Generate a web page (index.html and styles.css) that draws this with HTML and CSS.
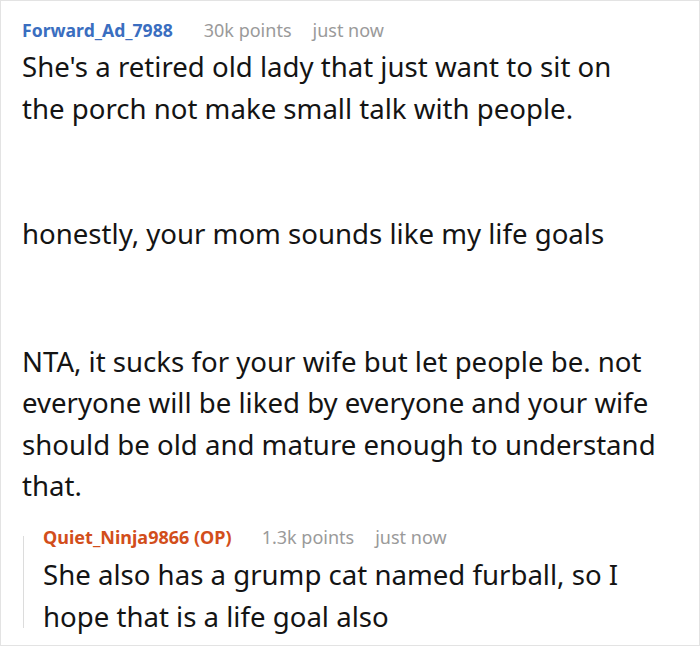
FILE: index.html
```html
<!DOCTYPE html>
<html lang="en">
<head>
<meta charset="utf-8">
<title>Comment</title>
<link rel="stylesheet" href="styles.css">
</head>
<body>
<div class="card">
  <div class="meta">
    <span class="author">Forward_Ad_7988</span>
    <span class="points">30k points</span>
    <span class="time">just now</span>
  </div>
  <div class="body">
    <p>She's a retired old lady that just want to sit on the porch not make small talk with people.</p>
    <p class="gap1">honestly, your mom sounds like my life goals</p>
    <p class="gap2">NTA, it sucks for your wife but let people be. not everyone will be liked by everyone and your wife should be old and mature enough to understand that.</p>
  </div>
  <div class="reply">
    <div class="meta">
      <span class="author op">Quiet_Ninja9866 (OP)</span>
      <span class="points">1.3k points</span>
      <span class="time">just now</span>
    </div>
    <div class="body">
      <p>She also has a grump cat named furball, so I hope that is a life goal also</p>
    </div>
  </div>
</div>
</body>
</html>
```

FILE: styles.css
```css
html, body {
  margin: 0;
  padding: 0;
  background: #ffffff;
}

.card {
  box-sizing: border-box;
  width: 700px;
  height: 646px;
  border: 1px solid #e3e3e3;
  padding: 17px 42px 0 21px;
  font-family: "Noto Sans", sans-serif;
  color: #141414;
  overflow: hidden;
}

.meta {
  display: flex;
  align-items: baseline;
  font-size: 18px;
  line-height: 24px;
  height: 24px;
  white-space: nowrap;
}

.author {
  font-weight: 700;
  font-size: 17.6px;
  color: #3a6ec0;
  margin-right: 31px;
}

.author.op {
  font-size: 18px;
  color: #d24e1b;
  margin-right: 30px;
}

.points {
  color: #9a9a9a;
  margin-right: 21px;
}

.time {
  color: #9a9a9a;
}

.body {
  margin-top: 4px;
}

.body p {
  margin: 0;
  font-size: 27.6px;
  line-height: 41.5px;
}

.body p.gap1 {
  margin-top: 84px;
}

.body p.gap2 {
  margin-top: 86px;
}

.reply {
  margin-top: 18px;
  padding-left: 20px;
  margin-left: 1px;
  background: linear-gradient(#dcdcdc, #dcdcdc) no-repeat 0 11px / 1px calc(100% - 20px);
}

.reply .body {
  margin-top: 4px;
}

.reply .body p {
  line-height: 42.4px;
}
```
